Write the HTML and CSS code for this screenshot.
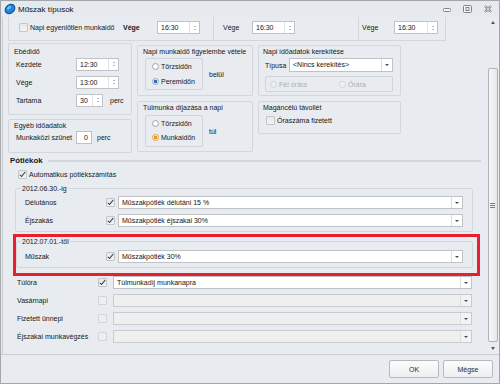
FILE: index.html
```html
<!DOCTYPE html>
<html lang="hu">
<head>
  <meta charset="UTF-8">
  <title>Műszak típusok</title>
  <link rel="stylesheet" href="styles.css">
</head>
<body>
<div class="window">
  <div class="titlebar">
    <svg class="app-icon" width="12" height="12" viewBox="0 0 12 12">
      <ellipse cx="6" cy="6" rx="5.3" ry="4.2" transform="rotate(-40 6 6)" fill="#1f86dc" stroke="#0b4c94" stroke-width="1"/>
      <ellipse cx="5" cy="4.8" rx="2.4" ry="1.3" transform="rotate(-40 5 4.8)" fill="#6fc0f5"/>
    </svg>
    <span class="title">Műszak típusok</span>
    <div class="wincontrols">
      <svg width="8" height="8" viewBox="0 0 8 8"><rect x="0.5" y="3.5" width="7" height="3" rx="1" fill="#f4f5f6" stroke="#7d8288"/></svg>
      <svg width="9" height="8" viewBox="0 0 9 8"><rect x="0.5" y="0.5" width="8" height="7" rx="1" fill="#f4f5f6" stroke="#7d8288"/><rect x="3" y="2.5" width="3" height="3" fill="none" stroke="#7d8288"/></svg>
      <svg width="8" height="8" viewBox="0 0 8 8"><path d="M1 1L7 7M7 1L1 7" stroke="#7d8288" stroke-width="2.4"/><path d="M1 1L7 7M7 1L1 7" stroke="#f4f5f6" stroke-width="0.8"/></svg>
    </div>
  </div>

  <div class="main">
    <div class="panel">
      <!-- scrolled-off top part -->
      <div class="toprow">
        <div class="topbox topbox-1">
          <span class="check-label top-check"><span class="cb"></span>Napi egyenlőtlen munkaidő</span>
          <span class="top-label top-label-1">Vége</span>
          <div class="spin spin-time"><span class="spin-val">16:30</span><span class="spin-btn"></span></div>
        </div>
        <div class="topbox topbox-2">
          <span class="top-label top-label-2">Vége</span>
          <div class="spin spin-time"><span class="spin-val">16:30</span><span class="spin-btn"></span></div>
        </div>
        <div class="topbox topbox-3">
          <span class="top-label top-label-3">Vége</span>
          <div class="spin spin-time-wide"><span class="spin-val">16:30</span><span class="spin-btn"></span></div>
        </div>
      </div>

      <div class="settings">
        <div class="col col-left">
          <div class="group group-lunch">
            <div class="group-title">Ebédidő</div>
            <div class="form-rows">
              <div class="form-row">
                <span class="form-label">Kezdete</span>
                <div class="spin spin-time"><span class="spin-val">12:30</span><span class="spin-btn"></span></div>
              </div>
              <div class="form-row">
                <span class="form-label">Vége</span>
                <div class="spin spin-time"><span class="spin-val">13:00</span><span class="spin-btn"></span></div>
              </div>
              <div class="form-row">
                <span class="form-label">Tartama</span>
                <div class="spin spin-short"><span class="spin-val">30</span><span class="spin-btn"></span></div>
                <span class="unit">perc</span>
              </div>
            </div>
          </div>
          <div class="group group-other">
            <div class="group-title">Egyéb időadatok</div>
            <div class="form-row">
              <span class="form-label">Munkaközi szünet</span>
              <div class="num-box">0</div>
              <span class="unit unit-near">perc</span>
            </div>
          </div>
        </div>

        <div class="col col-mid">
          <div class="group group-half">
            <div class="group-title">Napi munkaidő figyelembe vétele</div>
            <div class="radio-line">
              <div class="radio-box">
                <span class="radio-item"><span class="rd"></span>Törzsidőn</span>
                <span class="radio-item"><span class="rd rd-on"></span>Peremidőn</span>
              </div>
              <span class="radio-suffix">belül</span>
            </div>
          </div>
          <div class="group group-half group-second">
            <div class="group-title">Túlmunka díjazása a napi</div>
            <div class="radio-line radio-line-low">
              <div class="radio-box radio-box-tight">
                <span class="radio-item"><span class="rd"></span>Törzsidőn</span>
                <span class="radio-item"><span class="rd rd-hot"></span>Munkaidőn</span>
              </div>
              <span class="radio-suffix">túl</span>
            </div>
          </div>
        </div>

        <div class="col col-right">
          <div class="group group-half group-right">
            <div class="group-title">Napi időadatok kerekítése</div>
            <div class="form-row round-row">
              <span class="type-label">Típusa</span>
              <div class="combo combo-round"><span class="combo-val">&lt;Nincs kerekítés&gt;</span><span class="combo-btn"></span></div>
            </div>
            <div class="radio-box radio-box-wide">
              <span class="radio-item radio-item-half is-disabled"><span class="rd rd-off"></span>Fél órára</span>
              <span class="radio-item is-disabled"><span class="rd rd-off"></span>Órára</span>
            </div>
          </div>
          <div class="group group-private">
            <div class="group-title">Magáncélú távollét</div>
            <div class="check-label private-check"><span class="cb"></span>Óraszáma fizetett</div>
          </div>
        </div>
      </div>

      <div class="section-head">
        <span class="section-title">Pótlékok</span>
        <span class="section-line"></span>
      </div>

      <div class="check-label auto-check"><span class="cb cb-on"></span>Automatikus pótlékszámítás</div>

      <fieldset class="period period-old">
        <legend>2012.06.30.-ig</legend>
        <div class="fs-row">
          <span class="fs-label">Délutános</span>
          <span class="cb cb-on"></span>
          <div class="combo combo-period"><span class="combo-val">Műszakpótlék délutáni 15 %</span><span class="combo-btn"></span></div>
        </div>
        <div class="fs-row">
          <span class="fs-label">Éjszakás</span>
          <span class="cb cb-on"></span>
          <div class="combo combo-period"><span class="combo-val">Műszakpótlék éjszakai 30%</span><span class="combo-btn"></span></div>
        </div>
      </fieldset>

      <div class="highlight">
        <fieldset class="period period-new">
          <legend>2012.07.01.-től</legend>
          <div class="fs-row">
            <span class="fs-label">Műszak</span>
            <span class="cb cb-on"></span>
            <div class="combo combo-period"><span class="combo-val">Műszakpótlék 30%</span><span class="combo-btn"></span></div>
          </div>
        </fieldset>
      </div>

      <div class="extras">
        <div class="ex-row">
          <span class="fs-label">Túlóra</span>
          <span class="cb cb-on"></span>
          <div class="combo combo-extra"><span class="combo-val">Túlmunkadíj munkanapra</span><span class="combo-btn"></span></div>
        </div>
        <div class="ex-row">
          <span class="fs-label">Vasárnapi</span>
          <span class="cb cb-dim"></span>
          <div class="combo combo-extra is-disabled"><span class="combo-val"></span><span class="combo-btn"></span></div>
        </div>
        <div class="ex-row">
          <span class="fs-label">Fizetett ünnepi</span>
          <span class="cb cb-dim"></span>
          <div class="combo combo-extra is-disabled"><span class="combo-val"></span><span class="combo-btn"></span></div>
        </div>
        <div class="ex-row">
          <span class="fs-label">Éjszakai munkavégzés</span>
          <span class="cb cb-dim"></span>
          <div class="combo combo-extra is-disabled"><span class="combo-val"></span><span class="combo-btn"></span></div>
        </div>
      </div>
    </div>

    <div class="scrollbar">
      <span class="arrow-up"></span>
      <span class="thumb"><span class="grip"></span></span>
      <span class="arrow-down"></span>
    </div>
  </div>

  <div class="footer">
    <button class="btn">OK</button>
    <button class="btn">Mégse</button>
  </div>
</div>
</body>
</html>
```

FILE: styles.css
```css
* {
  box-sizing: border-box;
}

body {
  margin: 0;
  font: 7px/9px "Liberation Sans", Arial, sans-serif;
  color: #151618;
  background: #fff;
}

.window {
  width: 500px;
  height: 384px;
  border: 1px solid #a2a7ac;
  background: #e8ecf0;
  display: flex;
  flex-direction: column;
}

/* title bar */
.titlebar {
  height: 16px;
  display: flex;
  align-items: center;
  padding-left: 3px;
  background: #e6eaee;
}
.app-icon {
  margin-right: 2px;
  flex: none;
}
.title {
  font-size: 8px;
  color: #111214;
}
.wincontrols {
  margin-left: auto;
  padding-right: 7px;
  display: flex;
  align-items: center;
  gap: 12px;
}

/* main area */
.main {
  display: flex;
  height: 337px;
}
.panel {
  margin-left: 1px;
  width: 485px;
  border-left: 1px solid #c9cdd1;
}

.toprow {
  display: flex;
  height: 24px;
}
.topbox {
  display: flex;
  align-items: flex-start;
  padding-top: 4px;
  height: 24px;
  border-right: 1px solid #d3d7db;
  border-bottom: 1px solid #d3d7db;
  line-height: 13px;
}
.topbox-1 {
  margin-left: 5px;
  width: 206px;
  padding-left: 10px;
  border-left: 1px solid #d3d7db;
}
.topbox-2 {
  width: 145px;
  padding-left: 9px;
}
.topbox-3 {
  width: 87px;
  padding-left: 3px;
}
.top-check {
  width: 104px;
  height: 13px;
}
.top-label-1 {
  width: 34px;
  font-weight: bold;
}
.top-label-2 {
  width: 29px;
}
.top-label-3 {
  width: 32px;
}

/* controls */
.spin,
.num-box,
.combo {
  display: flex;
  height: 13px;
  background: #fff;
  border: 1px solid #bfc3c7;
  line-height: 11px;
}
.spin-time {
  width: 43px;
}
.spin-time-wide {
  width: 44px;
}
.spin-short {
  width: 27px;
}
.spin-val {
  flex: 1;
  padding-left: 3px;
  overflow: hidden;
}
.spin-btn {
  width: 10px;
  border-left: 1px solid #e0e2e4;
  display: flex;
  flex-direction: column;
  align-items: center;
  justify-content: center;
  gap: 2px;
}
.spin-btn::before,
.spin-btn::after {
  content: "";
  border-left: 1.5px solid transparent;
  border-right: 1.5px solid transparent;
}
.spin-btn::before {
  border-bottom: 1.5px solid #6a6e72;
}
.spin-btn::after {
  border-top: 1.5px solid #6a6e72;
}
.num-box {
  width: 16px;
  justify-content: flex-end;
  padding-right: 3px;
}

.combo-val {
  flex: 1;
  padding-left: 3px;
  white-space: nowrap;
  overflow: hidden;
}
.combo-btn {
  width: 11px;
  border-left: 1px solid #dcdfe2;
  display: flex;
  align-items: center;
  justify-content: center;
}
.combo-btn::after {
  content: "";
  border-left: 2px solid transparent;
  border-right: 2px solid transparent;
  border-top: 2.5px solid #4a4d50;
}
.combo.is-disabled {
  background: #efefef;
  border-color: #c9cccf;
}
.combo.is-disabled .combo-btn {
  background: #f3f3f3;
}

.cb {
  position: relative;
  flex: none;
  width: 9px;
  height: 9px;
  margin-right: 2px;
  border: 1px solid #c3c7cb;
  border-radius: 1px;
  background: linear-gradient(#e6e8ea, #f2f3f4);
}
.cb-on::after {
  content: "";
  position: absolute;
  left: 2.2px;
  top: 0;
  width: 2.4px;
  height: 4.8px;
  border: solid #3b3d40;
  border-width: 0 1.2px 1.2px 0;
  transform: rotate(40deg);
}
.cb-dim {
  border-color: #d2d5d8;
  background: #eceeef;
}

.check-label {
  display: flex;
  align-items: center;
}

.rd {
  flex: none;
  width: 7px;
  height: 7px;
  margin-right: 2px;
  border-radius: 50%;
  border: 1px solid #a5a9ad;
  background: radial-gradient(circle, #ffffff 40%, #e2e4e6);
}
.rd-on {
  background: radial-gradient(circle, #2f6fc2 0 1.5px, #dfe9f6 2px);
}
.rd-hot {
  border-color: #e2a64a;
  background: radial-gradient(circle, #e59a23 0 1.5px, #fde9c0 2px);
}
.rd-off {
  border-color: #d0d3d6;
  background: #eff0f1;
}

/* settings groups */
.settings {
  display: flex;
  align-items: flex-start;
  height: 112px;
}
.group {
  border: 1px solid #d3d7db;
  border-radius: 2px;
}
.group-title {
  line-height: 9px;
}
.col-left {
  margin-left: 5px;
  width: 124px;
}
.group-lunch {
  margin-top: 2px;
  height: 72px;
  padding: 3px 0 0 5px;
}
.group-other {
  margin-top: 4px;
  height: 34px;
  padding: 1px 0 0 5px;
}
.form-rows {
  display: flex;
  flex-direction: column;
  gap: 4px;
  margin-top: 1px;
}
.form-row {
  display: flex;
  align-items: center;
  height: 14px;
  padding-left: 2px;
}
.form-label {
  width: 60px;
}
.unit {
  margin-left: 7px;
}
.unit-near {
  margin-left: 5px;
}

.col-mid {
  margin-left: 5px;
  width: 116px;
}
.group-half {
  margin-top: 4px;
  height: 51px;
  padding: 1px 0 0 5px;
}
.group-second {
  margin-top: 5px;
}
.radio-line {
  display: flex;
  align-items: center;
  margin-top: 2px;
  padding-left: 2px;
}
.radio-line-low {
  margin-top: 3px;
}
.radio-box {
  width: 58px;
  height: 32px;
  border: 1px solid #d0d4d8;
  border-radius: 2px;
  display: flex;
  flex-direction: column;
  gap: 6px;
  padding: 3px 0 0 6px;
}
.radio-box-tight {
  gap: 5px;
}
.radio-item {
  display: flex;
  align-items: center;
  height: 9px;
}
.radio-suffix {
  margin-left: 6px;
}

.col-right {
  margin-left: 5px;
  width: 143px;
}
.group-right {
  padding-left: 4px;
}
.round-row {
  margin-top: 2px;
}
.type-label {
  width: 24px;
}
.combo-round {
  width: 104px;
  height: 14px;
  line-height: 12px;
}
.radio-box-wide {
  flex-direction: row;
  align-items: center;
  width: 128px;
  height: 16px;
  margin: 4px 0 0 2px;
  padding: 0 0 0 4px;
}
.radio-item-half {
  width: 63px;
}
.is-disabled {
  color: #abafb3;
}
.group-private {
  margin-top: 5px;
  height: 33px;
  padding: 1px 0 0 4px;
}
.private-check {
  margin-top: 4px;
  padding-left: 3px;
}

/* allowances */
.section-head {
  display: flex;
  align-items: center;
  height: 11px;
  margin-top: 2px;
  padding: 0 6px 0 7px;
}
.section-title {
  font-weight: bold;
  font-size: 7.8px;
}
.section-line {
  flex: 1;
  height: 2px;
  margin-left: 5px;
  background: #d3d7db;
}
.auto-check {
  margin-top: 4px;
  height: 9px;
  padding-left: 15px;
}

.period {
  margin: 0;
  border: 1px solid #d3d7db;
  border-radius: 2px;
  padding: 0 0 4px 9px;
  min-width: 0;
}
.period legend {
  padding: 0 1px;
  margin-left: -4px;
  line-height: 9px;
}
.period-old {
  margin: 5px 0 0 12px;
  width: 458px;
}
.period-old .fs-row + .fs-row {
  margin-top: 5px;
}
.fs-row {
  display: flex;
  align-items: center;
  height: 13px;
  margin-top: 3px;
}
.fs-label {
  width: 81px;
}
.fs-row .cb {
  margin-right: 3px;
}
.combo-period {
  width: 345px;
}

.highlight {
  margin: 2px 0 0 10px;
  width: 467px;
  height: 42px;
  border: 3px solid #e4212c;
}
.period-new {
  width: 457px;
  padding-left: 8px;
}
.period-new .fs-row {
  margin-top: 4px;
}

.extras {
  display: flex;
  flex-direction: column;
  gap: 5px;
  padding-left: 14px;
}
.ex-row {
  display: flex;
  align-items: center;
  height: 13px;
}
.ex-row .cb {
  margin-right: 6px;
}
.combo-extra {
  width: 359px;
}

/* scrollbar */
.scrollbar {
  width: 11px;
  display: flex;
  flex-direction: column;
  align-items: center;
  padding-top: 4px;
}
.arrow-up,
.arrow-down {
  border-left: 2px solid transparent;
  border-right: 2px solid transparent;
}
.arrow-up {
  border-bottom: 3px solid #55595d;
}
.arrow-down {
  margin-top: 5px;
  border-top: 3px solid #55595d;
}
.thumb {
  margin-top: 44px;
  width: 10px;
  height: 274px;
  border: 1px solid #aeb2b6;
  border-radius: 2px;
  background: linear-gradient(to right, #f7f8f9, #e5e7e9);
  display: flex;
  align-items: center;
  justify-content: center;
}
.grip {
  width: 5px;
  height: 5px;
  background: repeating-linear-gradient(#7a7e82 0 1px, transparent 1px 2px);
}

/* footer */
.footer {
  height: 29px;
  border-top: 1px solid #c9cdd1;
  display: flex;
  justify-content: flex-end;
  align-items: flex-start;
  gap: 4px;
  padding: 5px 6px 0 0;
}
.btn {
  width: 50px;
  height: 18px;
  border: 1px solid #b6babe;
  border-radius: 2px;
  background: linear-gradient(#fcfcfd, #eceef0);
  font: inherit;
  color: #2a2b2d;
  padding: 0;
}
```
